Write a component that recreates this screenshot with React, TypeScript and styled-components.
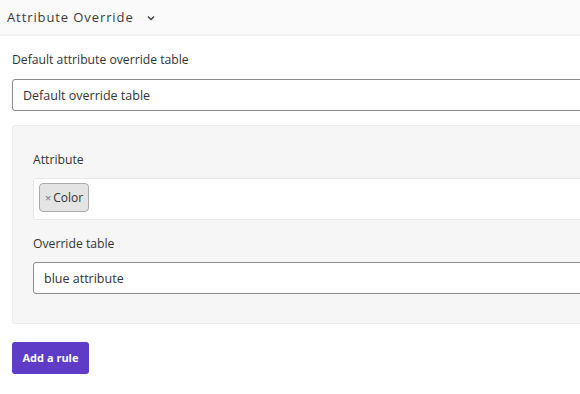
import React from 'react';
import styled, { createGlobalStyle } from 'styled-components';

const GlobalStyle = createGlobalStyle`
  body {
    margin: 0;
    background: #ffffff;
    font-family: 'Open Sans', 'Noto Sans', sans-serif;
    color: #333;
    overflow: hidden;
  }
`;

const Page = styled.div`
  width: 640px;
`;

const Header = styled.div`
  height: 34px;
  display: flex;
  align-items: center;
  gap: 12px;
  padding-left: 7px;
  background: #fafafa;
  border-bottom: 2px solid #f2f2f2;
  font-size: 13px;
  letter-spacing: 0.9px;
  color: #3a3a3a;
`;

const Chevron = styled.svg`
  width: 10px;
  height: 10px;
  margin-top: 1px;
`;

const Body = styled.div`
  padding: 15px 0 0 12px;
  display: flex;
  flex-direction: column;
`;

interface ILabel {
  margin?: string;
}

const Label = styled.div<ILabel>`
  font-size: 12.2px;
  line-height: 17px;
  color: #333;
  margin: ${props => props.margin || '0 0 11px'};
`;

const TextInput = styled.div`
  height: 32px;
  box-sizing: border-box;
  border: 1px solid #8c8c8c;
  border-radius: 3px;
  background: #fff;
  display: flex;
  align-items: center;
  padding-left: 10px;
  font-size: 12.5px;
  color: #333;
`;

const Panel = styled.div`
  margin-top: 14px;
  background: #f6f6f6;
  border: 1px solid #ebebeb;
  border-radius: 3px;
  padding: 25px 0 29px 20px;
  display: flex;
  flex-direction: column;
`;

const TagBox = styled.div`
  height: 42px;
  box-sizing: border-box;
  border: 1px solid #e6e6e6;
  border-radius: 3px;
  background: #fff;
  display: flex;
  align-items: flex-start;
  padding: 4px 0 0 5px;
`;

const Chip = styled.span`
  height: 29px;
  box-sizing: border-box;
  display: inline-flex;
  align-items: center;
  gap: 2px;
  padding: 0 5px 0 5px;
  background: #e4e4e4;
  border: 1px solid #aaaaaa;
  border-radius: 4px;
  font-size: 12px;
  color: #333;
`;

const Remove = styled.span`
  color: #888;
  font-size: 11px;
  font-weight: 600;
`;

const Button = styled.button`
  all: unset;
  margin-top: 18px;
  width: 77px;
  height: 32px;
  background: #5e3cc8;
  border-radius: 3px;
  color: #fff;
  font-family: 'Open Sans', 'Noto Sans', sans-serif;
  font-size: 11px;
  font-weight: 700;
  text-align: center;
  line-height: 32px;
`;

const App = () => {
  return (
    <Page>
      <GlobalStyle />
      <Header>
        Attribute Override
        <Chevron viewBox="0 0 10 10">
          <path d="M2 3.5 L5 6.5 L8 3.5" fill="none" stroke="#444" strokeWidth="1.5" />
        </Chevron>
      </Header>
      <Body>
        <Label>Default attribute override table</Label>
        <TextInput>Default override table</TextInput>
        <Panel>
          <Label margin="0 0 10px">Attribute</Label>
          <TagBox>
            <Chip>
              <Remove>×</Remove>Color
            </Chip>
          </TagBox>
          <Label margin="15px 0 10px">Override table</Label>
          <TextInput>blue attribute</TextInput>
        </Panel>
        <div>
          <Button>Add a rule</Button>
        </div>
      </Body>
    </Page>
  );
};

export default App;
